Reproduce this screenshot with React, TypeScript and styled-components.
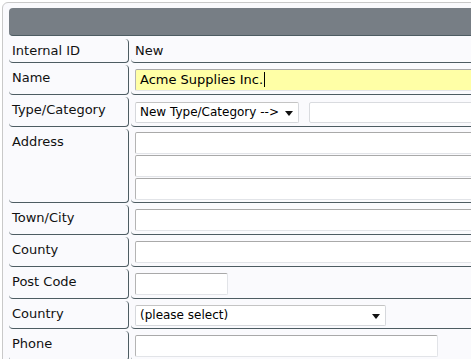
import React from "react";
import styled, { createGlobalStyle } from "styled-components";

const GlobalStyle = createGlobalStyle`
  html, body {
    margin: 0;
    padding: 0;
    background: #ffffff;
    overflow: hidden;
  }
  body {
    font-family: "DejaVu Sans", Verdana, sans-serif;
    font-size: 13px;
    color: #111;
  }
`;

const Panel = styled.div`
  margin: 2px 0 0 2px;
  width: 520px;
  height: 420px;
  padding: 5px 0 0 6px;
  border: 1px solid #c9c9c9;
  border-radius: 6px;
  background: #fafafd;
`;

const Header = styled.div`
  height: 27px;
  background: #777e85;
  border-bottom: 1px solid #4d5c62;
  border-radius: 4px 0 0 4px;
`;

const Grid = styled.div`
  display: grid;
  grid-template-columns: 120px 1fr;
  column-gap: 2px;
  row-gap: 2px;
  margin-top: 3px;
`;

// padding top / bottom vary a little between rows, as in the original form
const Cell = styled.div<{ $label?: boolean; $pt?: number; $pb?: number }>`
  padding: ${(p) =>
    p.$label
      ? "4px 3px 3px 3px"
      : `${p.$pt ?? 4}px 3px ${p.$pb ?? 3}px 4px`};
  border-bottom: 1px solid #4d5c62;
  border-right: ${(p) => (p.$label ? "1px solid #4d5c62" : "0")};
  border-radius: 4px;
  line-height: 16px;
  min-height: 16px;
`;

const Label = styled.span`
  display: block;
  padding-top: 1px;
`;

const Value = styled.span`
  display: block;
`;

const Input = styled.input<{ $width?: number }>`
  display: block;
  box-sizing: border-box;
  height: 22px;
  width: ${(p) => (p.$width ? `${p.$width}px` : "100%")};
  margin: 0;
  padding: 0 4px;
  font: inherit;
  font-size: 13px;
  color: #000;
  background: #ffffff;
  border: 1px solid #e2e4e8;
  border-top-color: #a9a9a9;
  border-left-color: #b4b4b4;
  border-radius: 2px;
  outline: none;

  & + & {
    margin-top: 1px;
  }
`;

const Row = styled.div`
  display: flex;
  gap: 10px;
  align-items: center;
  min-height: 22px;
`;

const SelectBox = styled.div<{ $width: number }>`
  position: relative;
  box-sizing: border-box;
  width: ${(p) => p.$width}px;
  height: 21px;
  padding: 0 20px 0 4px;
  background: #fff;
  border: 1px solid #d6d8dc;
  border-top-color: #c4c4c4;
  border-radius: 2px;
  font-size: 12px;
  line-height: 19px;
  color: #000;
  white-space: nowrap;

  &::after {
    content: "";
    position: absolute;
    right: 5px;
    top: 8px;
    border-left: 4px solid transparent;
    border-right: 4px solid transparent;
    border-top: 5px solid #111;
  }
`;

const Side = styled(Input)`
  flex: 1;
  height: 21px;
  border-color: #d9dbdf;
`;

const Caret = styled.span`
  display: inline-block;
  width: 1px;
  height: 15px;
  background: #000;
  vertical-align: -3px;
  margin-left: 1px;
`;

const NameField = styled.div`
  box-sizing: border-box;
  height: 22px;
  padding: 0 4px;
  font-size: 13px;
  line-height: 20px;
  color: #000;
  background: #ffffa6;
  border: 1px solid #e2e4e8;
  border-top-color: #a9a9a9;
  border-left-color: #b4b4b4;
  border-radius: 2px;
  white-space: nowrap;
`;

const App = () => {
  return (
    <>
      <GlobalStyle />
      <Panel>
        <Header />
        <Grid>
          <Cell $label>Internal ID</Cell>
          <Cell>
            <Value>New</Value>
          </Cell>

          <Cell $label>
            <Label>Name</Label>
          </Cell>
          <Cell>
            <NameField>
              Acme Supplies Inc.
              <Caret />
            </NameField>
          </Cell>

          <Cell $label>
            <Label>Type/Category</Label>
          </Cell>
          <Cell>
            <Row>
              <SelectBox $width={164}>New Type/Category --&gt;</SelectBox>
              <Side readOnly />
            </Row>
          </Cell>

          <Cell $label>
            <Label>Address</Label>
          </Cell>
          <Cell $pt={3} $pb={2}>
            <Input readOnly />
            <Input readOnly />
            <Input readOnly />
          </Cell>

          <Cell $label>
            <Label>Town/City</Label>
          </Cell>
          <Cell>
            <Input readOnly />
          </Cell>

          <Cell $label>
            <Label>County</Label>
          </Cell>
          <Cell>
            <Input readOnly />
          </Cell>

          <Cell $label>
            <Label>Post Code</Label>
          </Cell>
          <Cell>
            <Input readOnly $width={93} />
          </Cell>

          <Cell $label>
            <Label>Country</Label>
          </Cell>
          <Cell $pb={2}>
            <SelectBox $width={251}>(please select)</SelectBox>
          </Cell>

          <Cell $label>
            <Label>Phone</Label>
          </Cell>
          <Cell>
            <Input readOnly $width={303} />
          </Cell>
        </Grid>
      </Panel>
    </>
  );
};

export default App;
